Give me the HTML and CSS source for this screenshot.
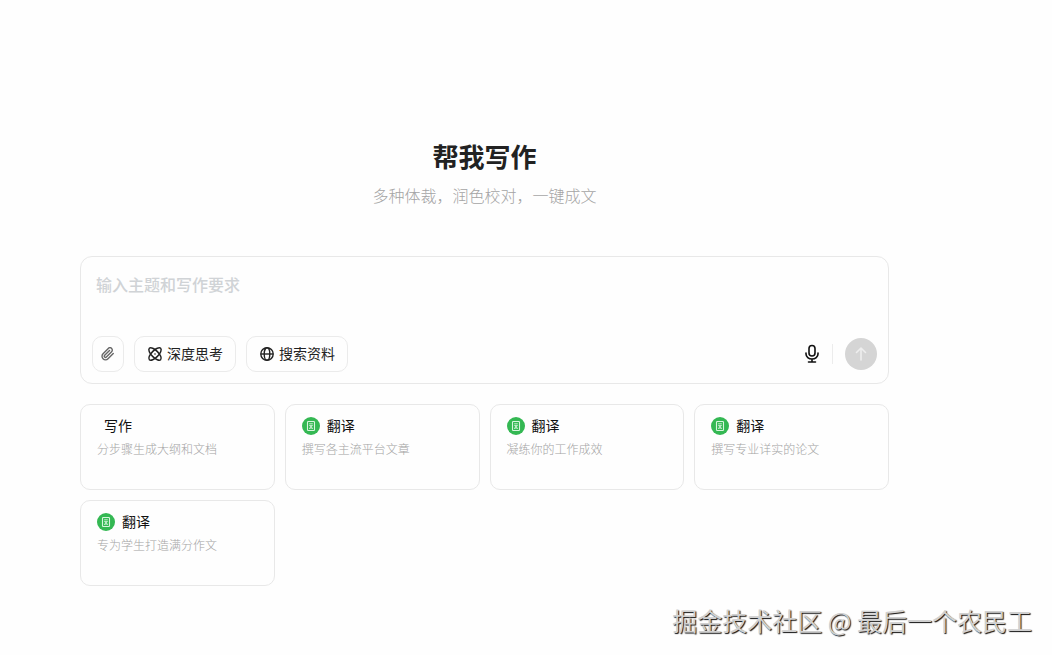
FILE: index.html
```html
<!DOCTYPE html>

<html lang="zh-CN">
    <head>
        <meta charset="UTF-8">
        <meta name="viewport" content="width=device-width, initial-scale=1">
        <title>帮我写作</title>
        <link rel="stylesheet" href="styles.css">
    </head>

    <body>
        <svg class="symbols" aria-hidden="true">
            <symbol id="icon-doc" viewBox="0 0 18 18">
                <circle cx="9" cy="9" r="9" fill="#34b853"/>
                <rect x="5.5" y="4.5" width="7" height="9" rx="0.8" fill="none" stroke="#d8f5de" stroke-width="1.1"/>
                <path d="M7.2 6.800h3.600M7.200 8.600h3.600M7.400 12l1.600-3 1.600 3M8 11h2" fill="none" stroke="#d8f5de" stroke-width="0.9"/>
            </symbol>
        </svg>

        <main class="page">
            <h1 class="title">帮我写作</h1>
            <p class="subtitle">多种体裁，润色校对，一键成文</p>

            <form class="editor">
                <textarea class="editor-input" aria-label="输入主题和写作要求" placeholder="输入主题和写作要求"></textarea>

                <div class="toolbar">
                    <button type="button" class="tool attach" aria-label="附件">
                        <svg class="clip" viewBox="0 0 24 24" fill="none" stroke="currentColor" stroke-width="2.400" stroke-linecap="round">
                            <path d="M21 11l-9 9a6 6 0 0 1-8.500-8.500l9-9a4 4 0 0 1 5.700 5.700l-9 9a2 2 0 0 1-2.900-2.900l8.300-8.200"/>
                        </svg>
                    </button>

                    <button type="button" class="tool">
                        <svg class="icon" viewBox="0 0 16 16" fill="none" stroke="currentColor" stroke-width="1.5">
                            <ellipse cx="8" cy="8" rx="8" ry="3.400" transform="rotate(45 8 8)"/>
                            <ellipse cx="8" cy="8" rx="8" ry="3.400" transform="rotate(-45 8 8)"/>
                            <circle cx="8" cy="8" r="0.8" fill="currentColor" stroke="none"/>
                        </svg>
                        <span class="tool-name">深度思考</span>
                    </button>

                    <button type="button" class="tool">
                        <svg class="icon" viewBox="0 0 16 16" fill="none" stroke="currentColor" stroke-width="1.4">
                            <circle cx="8" cy="8" r="6.200"/>
                            <ellipse cx="8" cy="8" rx="2.800" ry="6.200"/>
                            <path d="M1.800 8h12.400"/>
                        </svg>
                        <span class="tool-name">搜索资料</span>
                    </button>

                    <div class="actions">
                        <button type="button" class="mic" aria-label="语音输入">
                            <svg viewBox="0 0 20 20" fill="none" stroke="currentColor" stroke-width="1.600" stroke-linecap="round">
                                <rect x="7" y="1.500" width="6" height="10.500" rx="3"/>
                                <path d="M4 9v1a6 5 0 0 0 12 0V9M10 15v3M6.500 18h7"/>
                            </svg>
                        </button>
                        <span class="line"></span>
                        <button type="submit" class="send" aria-label="发送" disabled>
                            <svg viewBox="0 0 16 16" fill="none" stroke="currentColor" stroke-width="1.600" stroke-linecap="round" stroke-linejoin="round">
                                <path d="M8 14V2M3.500 6.500L8 2l4.500 4.500"/>
                            </svg>
                        </button>
                    </div>
                </div>
            </form>

            <div class="cards">
                <a class="card" href="#">
                    <div class="card-head">
                        <span class="card-name">写作</span>
                    </div>
                    <div class="card-desc">分步骤生成大纲和文档</div>
                </a>

                <a class="card" href="#">
                    <div class="card-head">
                        <svg class="card-icon"><use href="#icon-doc"/></svg>
                        <span class="card-name">翻译</span>
                    </div>
                    <div class="card-desc">撰写各主流平台文章</div>
                </a>

                <a class="card" href="#">
                    <div class="card-head">
                        <svg class="card-icon"><use href="#icon-doc"/></svg>
                        <span class="card-name">翻译</span>
                    </div>
                    <div class="card-desc">凝练你的工作成效</div>
                </a>

                <a class="card" href="#">
                    <div class="card-head">
                        <svg class="card-icon"><use href="#icon-doc"/></svg>
                        <span class="card-name">翻译</span>
                    </div>
                    <div class="card-desc">撰写专业详实的论文</div>
                </a>

                <a class="card" href="#">
                    <div class="card-head">
                        <svg class="card-icon"><use href="#icon-doc"/></svg>
                        <span class="card-name">翻译</span>
                    </div>
                    <div class="card-desc">专为学生打造满分作文</div>
                </a>
            </div>
        </main>

        <div class="watermark">掘金技术社区 @ 最后一个农民工</div>
    </body>
</html>
```

FILE: styles.css
```css
*
{
    box-sizing: border-box;
}

body
{
    margin: 0;
    background: #fefefe;
    color: #111;
    font-family: "Noto Sans CJK SC", sans-serif;
    font-size: 14px;
}

button,
textarea
{
    font: inherit;
}

.symbols
{
    display: none;
}

.page
{
    padding: 136px 163px 0 80px;
}

.title
{
    margin: 0;
    color: #222;
    font-size: 26px;
    line-height: 40px;
    text-align: center;
}

.subtitle
{
    margin: 7px 0 49px;
    color: #a4a4a4;
    font-size: 16px;
    font-weight: 300;
    line-height: 24px;
    text-align: center;
}

.editor
{
    padding: 15px 11px 11px;
    border: 1px solid #e8e8e8;
    border-radius: 12px;
}

.editor-input
{
    display: block;
    width: 100%;
    height: 64px;
    padding: 0 4px;
    border: none;
    outline: none;
    resize: none;
    background: none;
    font-size: 16px;
    line-height: 24px;
}

.editor-input::placeholder
{
    color: #d0d3d6;
    font-weight: 500;
}

.toolbar
{
    display: flex;
    align-items: center;
    gap: 10px;
}

.tool
{
    display: flex;
    align-items: center;
    justify-content: center;
    gap: 4px;
    height: 36px;
    padding: 0 12px;
    border: 1px solid #ebebeb;
    border-radius: 10px;
    background: none;
    color: #222;
    cursor: pointer;
}

.tool-name,
.card-name
{
    line-height: 20px;
    padding-bottom: 2px;
}

.attach
{
    width: 32px;
    padding: 0;
    color: #666;
}

.clip
{
    width: 14px;
    height: 14px;
}

.icon
{
    width: 16px;
    height: 16px;
}

.actions
{
    display: flex;
    align-items: center;
    gap: 10px;
    margin-left: auto;
}

.mic
{
    width: 20px;
    height: 20px;
    padding: 0;
    border: none;
    background: none;
    color: #111;
    cursor: pointer;
}

.mic svg
{
    display: block;
}

.line
{
    width: 1px;
    height: 20px;
    margin-right: 2px;
    background: #ececec;
}

.send
{
    display: flex;
    align-items: center;
    justify-content: center;
    width: 32px;
    height: 32px;
    padding: 0;
    border: none;
    border-radius: 50%;
    background: #d5d5d5;
    color: #eee;
}

.send svg
{
    width: 16px;
    height: 16px;
}

.cards
{
    display: grid;
    grid-template-columns: repeat(4, 1fr);
    gap: 10px;
    margin-top: 20px;
}

.card
{
    height: 86px;
    padding: 10px 16px;
    border: 1px solid #e8e8e8;
    border-radius: 10px;
    color: #111;
    text-decoration: none;
}

.card-head
{
    display: flex;
    align-items: center;
    height: 22px;
}

.card-icon
{
    width: 18px;
    height: 18px;
}

.card-name
{
    margin-left: 7px;
}

.card-desc
{
    margin-top: 3px;
    color: #a4a4a4;
    font-size: 12px;
    font-weight: 300;
    line-height: 18px;
}

.watermark
{
    position: absolute;
    right: 20px;
    bottom: 17px;
    color: #d0d0d0;
    font-size: 25px;
    line-height: 36px;
    text-shadow: 1px 1px 1px #111;
}
```
